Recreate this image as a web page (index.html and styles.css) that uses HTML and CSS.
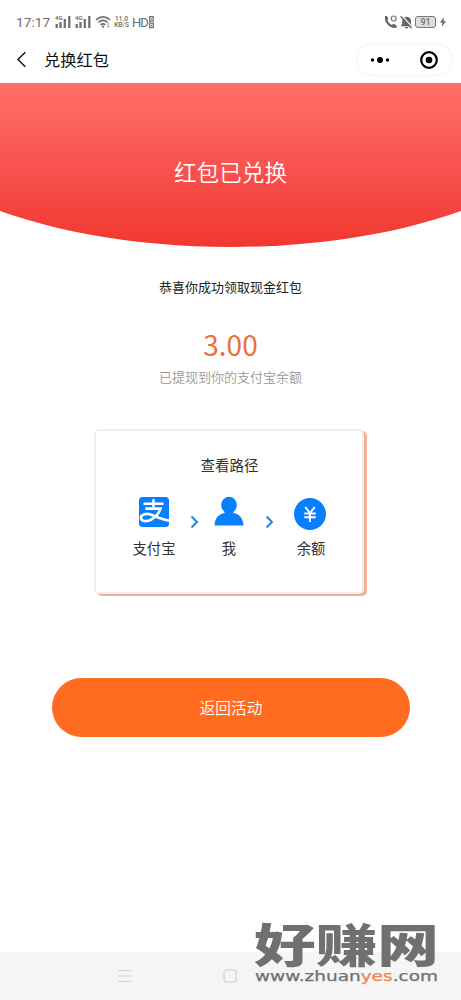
FILE: index.html
```html
<!DOCTYPE html>
<html lang="zh-CN">
<head>
<meta charset="UTF-8">
<meta name="viewport" content="width=device-width, initial-scale=1">
<title>兑换红包</title>
<link rel="stylesheet" href="styles.css">
</head>
<body>
<main class="screen">
  <header class="topbar">
    <div class="status">
      <span class="clock">17:17</span>
      <svg class="signal" width="17" height="14" viewBox="0 0 17 14"><text x="0" y="5" class="tiny">4G</text><path d="M1.7 9v4M5.5 7v6M9.8 4v9M14.3 1v12" stroke="#707070" stroke-width="2.3"/></svg>
      <svg class="signal second" width="17" height="14" viewBox="0 0 17 14"><text x="0" y="5" class="tiny">4G</text><path d="M1.7 9v4M5.5 7v6M9.8 4v9M14.3 1v12" stroke="#707070" stroke-width="2.3"/></svg>
      <svg class="wifi" width="17" height="14" viewBox="0 0 17 14"><g fill="none" stroke="#707070" stroke-width="1.7"><path d="M1 4.8Q8 -1.2 15 4.8M3.4 7.3Q8 3.3 12.6 7.3M5.6 9.8Q8 7.8 10.4 9.8"/></g><circle cx="8" cy="11.6" r="1.2" fill="#707070"/><path d="M12 9.5l1.3-1.6 1.3 1.6zM12 11l1.3 1.6 1.3-1.6z" fill="#707070"/></svg>
      <span class="speed"><span>11.0</span><span>KB/S</span></span>
      <span class="hd">HD</span>
      <svg class="sims" width="5" height="13" viewBox="0 0 5 13"><g fill="none" stroke="#707070" stroke-width="1.3"><path d="M.7.7h3.5v4.5H.7zM.7 7.2h3.5v4.5H.7zM2 3h1M2 9.5h1"/></g></svg>
      <svg class="call" width="14" height="14" viewBox="0 0 14 14"><path d="M2.7.8L4.5 4 3.4 5.5Q4.8 8.5 7.7 10l1.6-1.3 3.3 1.5v2.5Q7.5 14 3.7 9.6.1 5.5 1 1.2z" fill="#666"/><circle cx="9.7" cy="3.5" r="2.5" fill="none" stroke="#777" stroke-width="1.2"/></svg>
      <svg class="bell" width="13" height="14" viewBox="0 0 13 14"><path d="M6.5.5v1.2Q11 2.2 11 6v3l1.5 2.2H.7L2.2 9V6Q2.2 2.2 6.5 1.7M5 12h3v1.2H5z" fill="#666"/><path d="M1.5.3l11 12" stroke="#fff" stroke-width="1.3"/><path d="M.7 1.3l10.8 12" stroke="#666" stroke-width="1.4"/></svg>
      <span class="battery">91</span>
      <svg class="bolt" width="6" height="10" viewBox="0 0 6 10"><path d="M3.7.3L0 5.6h2.4L1.9 9.7 6 4.2H3.6z" fill="#666"/></svg>
    </div>
    <div class="nav">
      <svg class="back" width="12" height="18" viewBox="0 0 12 18"><path d="M10.3 1.3L3 8.5l7.3 7.2" fill="none" stroke="#222" stroke-width="1.6"/></svg>
      <h1 class="title">兑换红包</h1>
      <div class="capsule">
        <svg class="dots" width="20" height="8" viewBox="0 0 20 8"><circle cx="2.5" cy="4" r="1.7"/><circle cx="10" cy="4" r="3"/><circle cx="17.5" cy="4" r="1.7"/></svg>
        <span class="divider"></span>
        <svg class="target" width="20" height="20" viewBox="0 0 20 20"><circle cx="10" cy="10" r="7.8" fill="none" stroke="#000" stroke-width="2.2"/><circle cx="10" cy="10" r="3.3"/></svg>
      </div>
    </div>
  </header>

  <section class="hero">红包已兑换</section>

  <section class="result">
    <p class="congrats">恭喜你成功领取现金红包</p>
    <p class="amount">3.00</p>
    <p class="note">已提现到你的支付宝余额</p>
  </section>

  <section class="card">
    <h2 class="card-title">查看路径</h2>
    <div class="path">
      <div class="step">
        <svg class="step-icon" width="32" height="32" viewBox="0 0 32 32"><rect x="1" y="1" width="30" height="30" rx="3.5" fill="#087fff"/><path d="M5.5 7.8h20M15.5 3.2v9.3M7.4 12.6h15.1Q20 19.8 13.6 23.4C8.5 26.3 3 25.5 3 21.7c0-3.7 6-4.8 11-2.7 5.8 2.4 10.5 4.7 17 5.6" fill="none" stroke="#fff" stroke-width="2.6"/></svg>
        <span>支付宝</span>
      </div>
      <svg class="chevron" width="9" height="14" viewBox="0 0 9 14"><path d="M1.5 1.5L7 7l-5.5 5.5" fill="none" stroke="#2686dc" stroke-width="2"/></svg>
      <div class="step me">
        <svg class="step-icon" width="32" height="32" viewBox="0 0 32 32"><ellipse cx="16" cy="9" rx="7.8" ry="8.2" fill="#087fff"/><path d="M11.5 14h9v3c5.8 1 9.5 5.1 10 12.5h-29C2 22.1 5.7 18 11.5 17z" fill="#087fff"/></svg>
        <span>我</span>
      </div>
      <svg class="chevron" width="9" height="14" viewBox="0 0 9 14"><path d="M1.5 1.5L7 7l-5.5 5.5" fill="none" stroke="#2686dc" stroke-width="2"/></svg>
      <div class="step balance">
        <svg class="step-icon" width="32" height="32" viewBox="0 0 32 32"><circle cx="16" cy="16" r="16" fill="#087fff"/><path d="M11.2 9l4.8 6 4.8-6M10.3 15.4h11.4M10.3 19.2h11.4M16 15v9" fill="none" stroke="#fff" stroke-width="2"/></svg>
        <span>余额</span>
      </div>
    </div>
  </section>

  <button class="return" type="button">返回活动</button>

  <footer class="system-nav">
    <svg class="menu" width="16" height="14" viewBox="0 0 16 14"><path d="M1 1.5h14M1 7h14M1 12.5h14" stroke="#d5d5d5" stroke-width="1.2"/></svg>
    <svg class="home" width="14" height="14" viewBox="0 0 14 14"><rect x="1" y="1" width="12" height="12" rx="2" fill="none" stroke="#cfcfcf" stroke-width="1.2"/></svg>
  </footer>
  <svg class="watermark" width="196" height="85" viewBox="0 0 196 85">
    <text class="brand" transform="scale(1.326 1)" x="3.8" y="57" textLength="139.5" lengthAdjust="spacingAndGlyphs">好赚网</text>
    <text class="site" x="6" y="76" textLength="183" lengthAdjust="spacingAndGlyphs">www.zhuan<tspan class="accent">yes</tspan>.com</text>
  </svg>
</main>
</body>
</html>
```
FILE: styles.css
```css
* { box-sizing: border-box; }
body {
  margin: 0;
  background: #fff;
  color: #222;
  font-family: "Noto Sans CJK SC", sans-serif;
}
h1, h2, p { margin: 0; font-weight: 400; }
svg { display: block; flex: none; }
.screen {
  position: relative;
  display: flex;
  flex-direction: column;
  width: 461px;
  height: 1000px;
  overflow: hidden;
}
.topbar { height: 83px; padding-top: 12px; }
.status {
  display: flex;
  align-items: center;
  height: 20px;
  padding: 0 15px 0 16px;
  color: #6c6c6c;
  font-family: Roboto, sans-serif;
}
.clock { width: 39px; font-size: 13.6px; letter-spacing: .1px; }
.signal.second { margin-left: 3px; }
.wifi { margin-left: 3px; }
.tiny { font: 700 6px Roboto, sans-serif; fill: #707070; }
.speed {
  display: flex;
  flex-direction: column;
  width: 15px;
  margin-left: 2px;
  font-size: 6.5px;
  font-weight: 500;
  line-height: 6px;
  text-align: center;
}
.hd { margin-left: 3px; font-size: 13px; letter-spacing: -1px; }
.sims { margin-left: 1px; }
.call { margin-left: auto; }
.bell { margin-left: 2px; }
.battery {
  width: 21px;
  height: 12px;
  margin: 0 4px 0 2px;
  border: 1px solid #777;
  border-radius: 3px;
  background: #ddd;
  font-size: 9px;
  font-weight: 500;
  line-height: 10px;
  text-align: center;
}
.nav { display: flex; align-items: center; height: 55px; padding: 0 8px 0 15px; }
.title { margin: -2px 0 0 17px; color: #111; font-size: 16.3px; line-height: 24px; }
.capsule {
  display: flex;
  align-items: center;
  width: 97px;
  height: 33px;
  margin-left: auto;
  padding: 0 13px;
  border: 1px solid #f4f4f4;
  border-radius: 17px;
}
.divider { width: 1px; height: 18px; margin-left: 14px; background: #eee; }
.target { margin-left: 15px; }
.hero {
  height: 164px;
  padding-top: 70px;
  background: linear-gradient(#ff7068, #f8534f 50%, #f13730);
  clip-path: ellipse(369px 164px at 50% 0);
  color: #fff;
  font-size: 22.6px;
  font-weight: 350;
  line-height: 37px;
  text-align: center;
}
.result { height: 182px; padding-top: 30px; text-align: center; }
.congrats { color: #222; font-size: 13px; line-height: 20px; }
.amount { margin-top: 28px; color: #e9703a; font-size: 28px; line-height: 38px; }
.note { margin-top: 4px; color: #999; font-size: 13px; font-weight: 350; line-height: 20px; }
.card {
  width: 270px;
  height: 165px;
  margin-left: 94px;
  padding: 23px 22px 0 38px;
  border: 2px solid #eee;
  border-radius: 5px;
  box-shadow: 3px 2px 0 #f8b094;
  background: #fff;
}
.card-title { margin-left: -15px; color: #333; font-size: 14.5px; line-height: 22px; text-align: center; }
.path { display: flex; margin-top: 20px; }
.step {
  display: flex;
  flex-direction: column;
  align-items: center;
  width: 44px;
  margin-left: -2px;
  color: #333;
  font-size: 14.3px;
  line-height: 22px;
  white-space: nowrap;
}
.step-icon { margin-bottom: 9px; }
.chevron { margin-top: 19px; margin-left: 14px; }
.step.me { margin-left: 8px; }
.step.balance { margin-left: 15px; }
.balance .step-icon { position: relative; top: 2px; left: -1px; }
.return {
  width: 358px;
  height: 59px;
  margin: 84px 0 0 52px;
  padding: 0;
  border: 0;
  border-radius: 30px;
  background: #ff6b1f;
  color: #fff;
  font: 350 15.7px/59px "Noto Sans CJK SC", sans-serif;
}
.system-nav {
  display: flex;
  align-items: center;
  height: 48px;
  margin-top: auto;
  padding-left: 117px;
  background: #f5f5f5;
}
.home { margin-left: 90px; }
.watermark { position: absolute; left: 249px; top: 905px; }
.brand { fill: #707070; font: 900 46px "Noto Sans CJK SC", sans-serif; }
.site { fill: #707070; stroke: #707070; stroke-width: .25px; font: 400 13.5px "DejaVu Sans", sans-serif; }
.accent { fill: #f18450; stroke: #f18450; }
```
